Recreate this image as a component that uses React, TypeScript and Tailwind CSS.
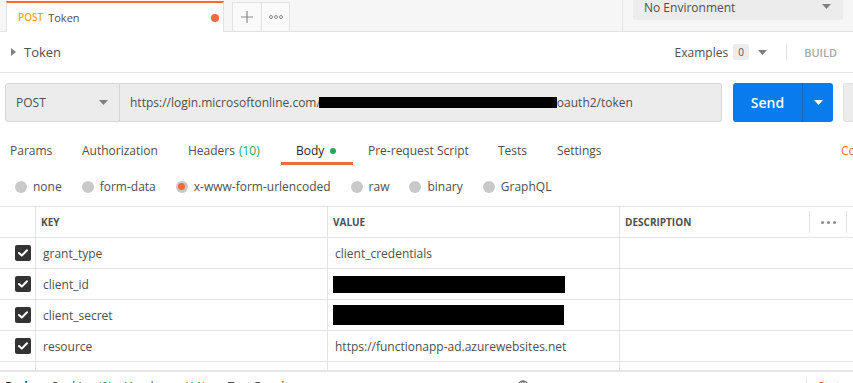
import React from "react";

const CaretDown = ({ color = "#808080", w = 9, h = 5 }: { color?: string; w?: number; h?: number }) => (
  <svg width={w} height={h} viewBox="0 0 9 5" className="shrink-0">
    <path d="M0 0 L9 0 L4.5 5 Z" fill={color} />
  </svg>
);

const CaretRight = () => (
  <svg width="5" height="8" viewBox="0 0 5 8" className="shrink-0">
    <path d="M0 0 L5 4 L0 8 Z" fill="#808080" />
  </svg>
);

const Check = () => (
  <div className="w-4 h-4 bg-[#333333] rounded-[2px] flex items-center justify-center">
    <svg width="10" height="8" viewBox="0 0 10 8">
      <path d="M1 4 L3.8 6.6 L9 1.2" stroke="white" strokeWidth="2" fill="none" strokeLinecap="round" strokeLinejoin="round" />
    </svg>
  </div>
);

const Radio = ({ label, on = false }: { label: string; on?: boolean }) => (
  <div className="flex items-center shrink-0">
    <div className="w-[12px] h-[12px] rounded-full bg-[#c9c9c9] flex items-center justify-center">
      {on && <div className="w-[7px] h-[7px] rounded-full bg-[#f26b3a]" />}
    </div>
    <span className="ml-[6px]">{label}</span>
  </div>
);

const rows: { key: string; value: React.ReactNode }[] = [
  { key: "grant_type", value: <span className="pl-[7px]">client_credentials</span> },
  { key: "client_id", value: <div className="ml-[5px] w-[232px] h-[17px] bg-black" /> },
  { key: "client_secret", value: <div className="ml-[5px] w-[231px] h-[20px] bg-black" /> },
  { key: "resource", value: <span className="pl-[7px]">https://functionapp-ad.azurewebsites.net</span> },
];

export default function App() {
  return (
    <div className="w-[853px] h-[383px] overflow-hidden bg-white font-['Open_Sans','Liberation_Sans',sans-serif] text-[#505050] text-[12px] leading-[17px]">
      {/* Top tab bar */}
      <div className="h-[32px] bg-[#f6f6f6] border-b border-[#e3e3e3] flex items-end pl-[6px]">
        <div className="w-[218px] shrink-0 h-[31px] -mb-px bg-white border-t-2 border-t-[#f26b3a] border-x border-x-[#e3e3e3] flex items-center pl-[11px] pr-[4px]">
          <span className="text-[10px] font-semibold text-[#f5a623]">POST</span>
          <span className="ml-[5px] text-[11px] text-[#505050]">Token</span>
          <div className="ml-auto w-[8px] h-[8px] rounded-full bg-[#f26b3a]" />
        </div>
        <div className="ml-[8px] flex h-[29px] shrink-0">
          <div className="w-[30px] border border-b-0 border-[#e3e3e3] bg-[#fafafa] flex items-center justify-center">
            <svg width="12" height="12" viewBox="0 0 12 12">
              <path d="M6 0 V12 M0 6 H12" stroke="#8a8a8a" strokeWidth="1.2" />
            </svg>
          </div>
          <div className="w-[28px] border border-l-0 border-b-0 border-[#e3e3e3] bg-[#fafafa] flex items-center justify-center gap-[1px]">
            {[0, 1, 2].map((i) => (
              <div key={i} className="w-[4px] h-[4px] rounded-full border border-[#8a8a8a]" />
            ))}
          </div>
        </div>
        <div className="flex-1" />
        <div className="w-px self-stretch bg-[#e3e3e3]" />
        <div className="ml-[10px] mr-[10px] shrink-0 self-start w-[210px] h-[20px] bg-[#ececec] rounded-b-[3px] flex items-center pl-[11px] pr-[12px]">
          <span className="text-[12px] text-[#505050] -mt-[5px]">No Environment</span>
          <div className="ml-auto -mt-[8px]">
            <CaretDown />
          </div>
        </div>
      </div>

      {/* Request name row */}
      <div className="h-[41px] border-b border-[#e3e3e3] flex items-center pl-[11px] pr-[16px]">
        <CaretRight />
        <span className="ml-[8px] text-[13px] text-[#505050]">Token</span>
        <div className="ml-auto flex items-center">
          <span className="text-[12px] text-[#505050]">Examples</span>
          <span className="ml-[5px] h-[16px] w-[16px] bg-[#ececec] rounded-[2px] text-[10px] flex items-center justify-center">0</span>
          <div className="ml-[9px]">
            <CaretDown />
          </div>
          <div className="ml-[19px] w-px h-[16px] bg-[#e3e3e3]" />
          <span className="ml-[17px] text-[11px] font-semibold text-[#a8a8a8]">BUILD</span>
        </div>
      </div>

      {/* URL row */}
      <div className="mt-[10px] h-[39px] flex pl-[5px]">
        <div className="w-[115px] shrink-0 bg-[#ececec] border border-[#d6d6d6] rounded-l-[3px] flex items-center pl-[10px] pr-[11px]">
          <span className="text-[12px] text-[#505050]">POST</span>
          <div className="ml-auto">
            <CaretDown />
          </div>
        </div>
        <div className="w-[602px] shrink-0 bg-[#ececec] border border-l-0 border-[#d6d6d6] rounded-r-[3px] flex items-center pl-[10px] text-[12px] whitespace-nowrap">
          <span>https://login.microsoftonline.com/</span>
          <div className="-ml-[2px] w-[238px] h-[11px] bg-black" />
          <span>oauth2/token</span>
        </div>
        <div className="ml-[11px] w-[100px] shrink-0 bg-[#097bed] rounded-[3px] flex">
          <div className="w-[69px] flex items-center justify-center text-white font-semibold text-[14px]">Send</div>
          <div className="w-px bg-[#0a68c9]" />
          <div className="flex-1 flex items-center justify-center">
            <CaretDown color="#ffffff" />
          </div>
        </div>
        <div className="ml-[10px] w-[60px] shrink-0 bg-[#ececec] border border-[#e0e0e0] rounded-[3px]" />
      </div>

      {/* Tabs */}
      <div className="mt-[14px] h-[29px] flex text-[12px] whitespace-nowrap">
        <div className="w-[67px] shrink-0 pl-[10px] flex items-center">Params</div>
        <div className="w-[106px] shrink-0 pl-[15px] flex items-center">Authorization</div>
        <div className="w-[108px] shrink-0 pl-[15px] flex items-center">
          Headers<span className="ml-[4px] text-[#26a65b]">(10)</span>
        </div>
        <div className="w-[72px] shrink-0 pl-[15px] flex items-center border-b-[3px] border-[#f26b3a] pt-[3px] text-[#282828]">
          Body<div className="ml-[6px] w-[6px] h-[6px] rounded-full bg-[#26a65b]" />
        </div>
        <div className="w-[130px] shrink-0 pl-[15px] flex items-center">Pre-request Script</div>
        <div className="w-[59px] shrink-0 pl-[15px] flex items-center">Tests</div>
        <div className="w-[284px] shrink-0 pl-[15px] flex items-center">Settings</div>
        <div className="shrink-0 pl-[15px] flex items-center text-[#f26b3a]">Cookies</div>
      </div>

      {/* Radio row */}
      <div className="h-[41px] pt-[2px] flex items-center pl-[15px] gap-[20px] text-[12px] whitespace-nowrap">
        <Radio label="none" />
        <Radio label="form-data" />
        <Radio label="x-www-form-urlencoded" on />
        <Radio label="raw" />
        <Radio label="binary" />
        <Radio label="GraphQL" />
      </div>

      {/* Table */}
      <div className="border-t border-[#e3e3e3]">
        <div className="grid grid-cols-[36px_292px_292px_1fr] h-[31px] border-b border-[#e3e3e3] text-[10px] font-bold text-[#505050]">
          <div className="border-r border-[#e3e3e3]" />
          <div className="border-r border-[#e3e3e3] pl-[5px] flex items-center">KEY</div>
          <div className="border-r border-[#e3e3e3] pl-[5px] flex items-center">VALUE</div>
          <div className="pl-[5px] flex items-center">
            <span>DESCRIPTION</span>
            <div className="flex-1" />
            <div className="w-px h-[22px] bg-[#e3e3e3]" />
            <div className="w-[36px] flex items-center justify-center gap-[3px]">
              {[0, 1, 2].map((i) => (
                <div key={i} className="w-[3px] h-[3px] rounded-full bg-[#8a8a8a]" />
              ))}
            </div>
            <div className="w-px h-[22px] bg-[#e3e3e3]" />
            <div className="w-[6px]" />
          </div>
        </div>
        {rows.map((r) => (
          <div key={r.key} className="grid grid-cols-[36px_292px_292px_1fr] h-[31px] border-b border-[#e3e3e3] text-[12px]">
            <div className="border-r border-[#e3e3e3] flex items-center pl-[15px]">
              <Check />
            </div>
            <div className="border-r border-[#e3e3e3] pl-[7px] flex items-center">{r.key}</div>
            <div className="border-r border-[#e3e3e3] flex items-center whitespace-nowrap">{r.value}</div>
            <div />
          </div>
        ))}
        <div className="grid grid-cols-[36px_292px_292px_1fr] h-[8px]">
          <div className="border-r border-[#e3e3e3]" />
          <div className="border-r border-[#e3e3e3]" />
          <div className="border-r border-[#e3e3e3]" />
          <div />
        </div>
      </div>

      {/* Response tabs (cut off) */}
      <div className="border-t-2 border-[#e6e6e6] pt-[6px] flex items-start text-[12px] whitespace-nowrap">
        <div className="w-[517px] shrink-0 flex pl-[5px]">
          <span className="font-semibold text-[#282828]">Body</span>
          <span className="ml-[16px]">Cookies</span>
          <span className="ml-[4px] text-[#26a65b]">(9)</span>
          <span className="ml-[12px]">Headers</span>
          <span className="ml-[14px] text-[#26a65b]">(11)</span>
          <span className="ml-[22px]">Test Results</span>
        </div>
        <svg width="12" height="12" viewBox="0 0 12 12" className="mt-[2px] shrink-0">
          <circle cx="6" cy="6" r="5" stroke="#707070" strokeWidth="1.3" fill="none" />
          <path d="M1 6 H11 M6 1 C3.5 3.5 3.5 8.5 6 11 M6 1 C8.5 3.5 8.5 8.5 6 11" stroke="#707070" strokeWidth="1" fill="none" />
        </svg>
        <div className="w-[277px] shrink-0" />
        <div className="w-px h-[20px] bg-[#e3e3e3] -mt-[1px]" />
        <span className="ml-[11px] text-[#f26b3a]">Status</span>
      </div>
    </div>
  );
}
